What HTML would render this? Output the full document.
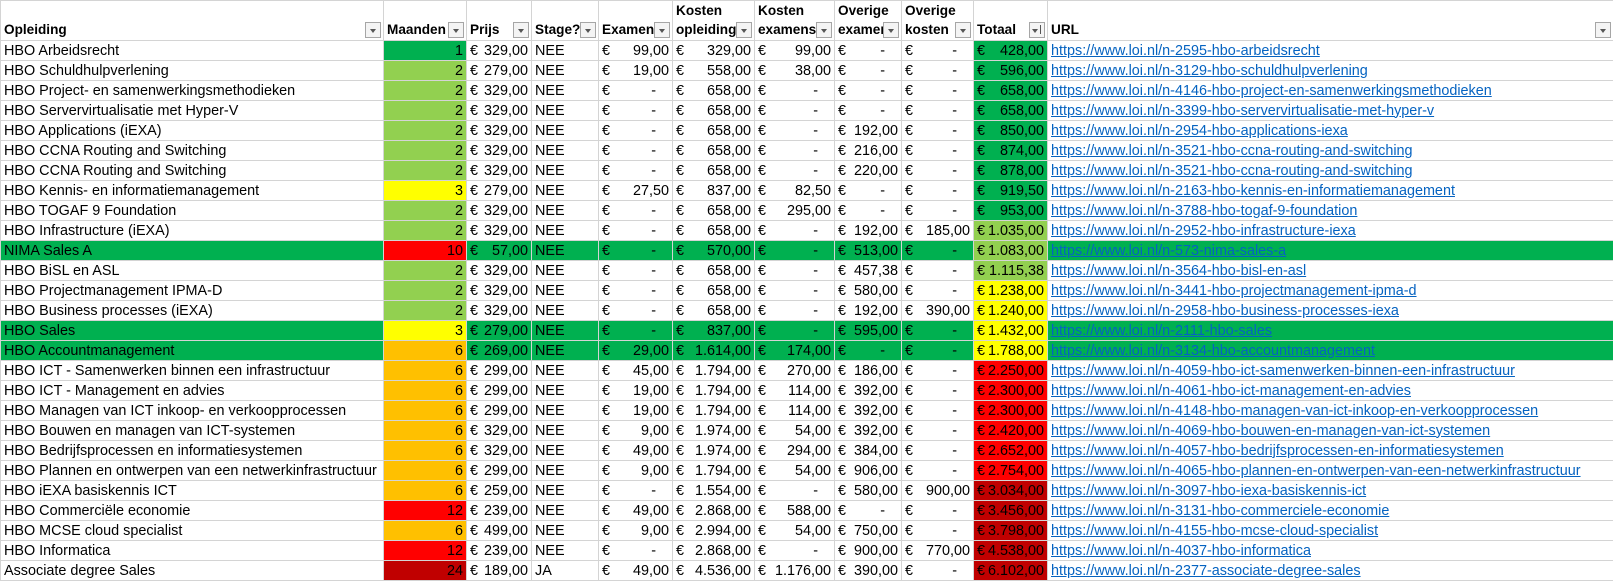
<!DOCTYPE html>
<html><head><meta charset="utf-8"><style>
body{margin:0;background:#fff;width:1613px;height:581px;overflow:hidden}
table{border-collapse:collapse;table-layout:fixed;width:1613px}
td,th{border:1px solid #d4d4d4;padding:0 3px;white-space:nowrap;overflow:hidden;font:14.4px "Liberation Sans",sans-serif;color:#000;line-height:18px}
tr{height:20px}
tr.h{height:40px}
th{text-align:left;vertical-align:bottom;font-weight:bold;font-size:13.6px;position:relative;line-height:19px;padding-bottom:1px}
.dd{position:absolute;right:2px;bottom:2px;width:14px;height:14px;border:1px solid #a6a6a6;background:#f4f4f4}
.dd:after{content:"";position:absolute;left:4px;top:6px;border-left:3px solid transparent;border-right:3px solid transparent;border-top:4px solid #555}
.ds:after{left:2px}
.ds:before{content:"";position:absolute;right:3px;top:2px;width:1px;height:9px;background:#555}
td.n{text-align:right}
td.e{text-align:right}
td.e i{float:left;font-style:normal}
td.d{padding-right:16px}
td.u a{color:#0563C1;text-decoration:underline}
tr.g td{background:#00B050}
.G{background:#00B050!important}.L{background:#92D050!important}.Y{background:#FFFF00!important}.O{background:#FFC000!important}.R{background:#FF0000!important}.D{background:#C00000!important}
</style></head><body>
<table>
<colgroup><col style="width:383px"><col style="width:83px"><col style="width:65px"><col style="width:67px"><col style="width:74px"><col style="width:82px"><col style="width:80px"><col style="width:67px"><col style="width:72px"><col style="width:74px"><col style="width:566px"></colgroup>
<tr class="h"><th>Opleiding<span class="dd"></span></th><th>Maanden<span class="dd"></span></th><th>Prijs<span class="dd"></span></th><th>Stage?<span class="dd"></span></th><th>Examen<span class="dd"></span></th><th>Kosten<br>opleiding<span class="dd"></span></th><th>Kosten<br>examens<span class="dd"></span></th><th>Overige<br>examen<span class="dd"></span></th><th>Overige<br>kosten<span class="dd"></span></th><th>Totaal<span class="dd ds"></span></th><th>URL<span class="dd"></span></th></tr>
<tr><td>HBO Arbeidsrecht</td><td class="n G">1</td><td class="e"><i>€</i>329,00</td><td>NEE</td><td class="e"><i>€</i>99,00</td><td class="e"><i>€</i>329,00</td><td class="e"><i>€</i>99,00</td><td class="e d"><i>€</i>-</td><td class="e d"><i>€</i>-</td><td class="e G"><i>€</i>428,00</td><td class="u"><a>https://www.loi.nl/n-2595-hbo-arbeidsrecht</a></td></tr>
<tr><td>HBO Schuldhulpverlening</td><td class="n L">2</td><td class="e"><i>€</i>279,00</td><td>NEE</td><td class="e"><i>€</i>19,00</td><td class="e"><i>€</i>558,00</td><td class="e"><i>€</i>38,00</td><td class="e d"><i>€</i>-</td><td class="e d"><i>€</i>-</td><td class="e G"><i>€</i>596,00</td><td class="u"><a>https://www.loi.nl/n-3129-hbo-schuldhulpverlening</a></td></tr>
<tr><td>HBO Project- en samenwerkingsmethodieken</td><td class="n L">2</td><td class="e"><i>€</i>329,00</td><td>NEE</td><td class="e d"><i>€</i>-</td><td class="e"><i>€</i>658,00</td><td class="e d"><i>€</i>-</td><td class="e d"><i>€</i>-</td><td class="e d"><i>€</i>-</td><td class="e G"><i>€</i>658,00</td><td class="u"><a>https://www.loi.nl/n-4146-hbo-project-en-samenwerkingsmethodieken</a></td></tr>
<tr><td>HBO Servervirtualisatie met Hyper-V</td><td class="n L">2</td><td class="e"><i>€</i>329,00</td><td>NEE</td><td class="e d"><i>€</i>-</td><td class="e"><i>€</i>658,00</td><td class="e d"><i>€</i>-</td><td class="e d"><i>€</i>-</td><td class="e d"><i>€</i>-</td><td class="e G"><i>€</i>658,00</td><td class="u"><a>https://www.loi.nl/n-3399-hbo-servervirtualisatie-met-hyper-v</a></td></tr>
<tr><td>HBO Applications (iEXA)</td><td class="n L">2</td><td class="e"><i>€</i>329,00</td><td>NEE</td><td class="e d"><i>€</i>-</td><td class="e"><i>€</i>658,00</td><td class="e d"><i>€</i>-</td><td class="e"><i>€</i>192,00</td><td class="e d"><i>€</i>-</td><td class="e G"><i>€</i>850,00</td><td class="u"><a>https://www.loi.nl/n-2954-hbo-applications-iexa</a></td></tr>
<tr><td>HBO CCNA Routing and Switching</td><td class="n L">2</td><td class="e"><i>€</i>329,00</td><td>NEE</td><td class="e d"><i>€</i>-</td><td class="e"><i>€</i>658,00</td><td class="e d"><i>€</i>-</td><td class="e"><i>€</i>216,00</td><td class="e d"><i>€</i>-</td><td class="e G"><i>€</i>874,00</td><td class="u"><a>https://www.loi.nl/n-3521-hbo-ccna-routing-and-switching</a></td></tr>
<tr><td>HBO CCNA Routing and Switching</td><td class="n L">2</td><td class="e"><i>€</i>329,00</td><td>NEE</td><td class="e d"><i>€</i>-</td><td class="e"><i>€</i>658,00</td><td class="e d"><i>€</i>-</td><td class="e"><i>€</i>220,00</td><td class="e d"><i>€</i>-</td><td class="e G"><i>€</i>878,00</td><td class="u"><a>https://www.loi.nl/n-3521-hbo-ccna-routing-and-switching</a></td></tr>
<tr><td>HBO Kennis- en informatiemanagement</td><td class="n Y">3</td><td class="e"><i>€</i>279,00</td><td>NEE</td><td class="e"><i>€</i>27,50</td><td class="e"><i>€</i>837,00</td><td class="e"><i>€</i>82,50</td><td class="e d"><i>€</i>-</td><td class="e d"><i>€</i>-</td><td class="e G"><i>€</i>919,50</td><td class="u"><a>https://www.loi.nl/n-2163-hbo-kennis-en-informatiemanagement</a></td></tr>
<tr><td>HBO TOGAF 9 Foundation</td><td class="n L">2</td><td class="e"><i>€</i>329,00</td><td>NEE</td><td class="e d"><i>€</i>-</td><td class="e"><i>€</i>658,00</td><td class="e"><i>€</i>295,00</td><td class="e d"><i>€</i>-</td><td class="e d"><i>€</i>-</td><td class="e G"><i>€</i>953,00</td><td class="u"><a>https://www.loi.nl/n-3788-hbo-togaf-9-foundation</a></td></tr>
<tr><td>HBO Infrastructure (iEXA)</td><td class="n L">2</td><td class="e"><i>€</i>329,00</td><td>NEE</td><td class="e d"><i>€</i>-</td><td class="e"><i>€</i>658,00</td><td class="e d"><i>€</i>-</td><td class="e"><i>€</i>192,00</td><td class="e"><i>€</i>185,00</td><td class="e L"><i>€</i>1.035,00</td><td class="u"><a>https://www.loi.nl/n-2952-hbo-infrastructure-iexa</a></td></tr>
<tr class="g"><td>NIMA Sales A</td><td class="n R">10</td><td class="e"><i>€</i>57,00</td><td>NEE</td><td class="e d"><i>€</i>-</td><td class="e"><i>€</i>570,00</td><td class="e d"><i>€</i>-</td><td class="e"><i>€</i>513,00</td><td class="e d"><i>€</i>-</td><td class="e L"><i>€</i>1.083,00</td><td class="u"><a>https://www.loi.nl/n-573-nima-sales-a</a></td></tr>
<tr><td>HBO BiSL en ASL</td><td class="n L">2</td><td class="e"><i>€</i>329,00</td><td>NEE</td><td class="e d"><i>€</i>-</td><td class="e"><i>€</i>658,00</td><td class="e d"><i>€</i>-</td><td class="e"><i>€</i>457,38</td><td class="e d"><i>€</i>-</td><td class="e L"><i>€</i>1.115,38</td><td class="u"><a>https://www.loi.nl/n-3564-hbo-bisl-en-asl</a></td></tr>
<tr><td>HBO Projectmanagement IPMA-D</td><td class="n L">2</td><td class="e"><i>€</i>329,00</td><td>NEE</td><td class="e d"><i>€</i>-</td><td class="e"><i>€</i>658,00</td><td class="e d"><i>€</i>-</td><td class="e"><i>€</i>580,00</td><td class="e d"><i>€</i>-</td><td class="e Y"><i>€</i>1.238,00</td><td class="u"><a>https://www.loi.nl/n-3441-hbo-projectmanagement-ipma-d</a></td></tr>
<tr><td>HBO Business processes (iEXA)</td><td class="n L">2</td><td class="e"><i>€</i>329,00</td><td>NEE</td><td class="e d"><i>€</i>-</td><td class="e"><i>€</i>658,00</td><td class="e d"><i>€</i>-</td><td class="e"><i>€</i>192,00</td><td class="e"><i>€</i>390,00</td><td class="e Y"><i>€</i>1.240,00</td><td class="u"><a>https://www.loi.nl/n-2958-hbo-business-processes-iexa</a></td></tr>
<tr class="g"><td>HBO Sales</td><td class="n Y">3</td><td class="e"><i>€</i>279,00</td><td>NEE</td><td class="e d"><i>€</i>-</td><td class="e"><i>€</i>837,00</td><td class="e d"><i>€</i>-</td><td class="e"><i>€</i>595,00</td><td class="e d"><i>€</i>-</td><td class="e Y"><i>€</i>1.432,00</td><td class="u"><a>https://www.loi.nl/n-2111-hbo-sales</a></td></tr>
<tr class="g"><td>HBO Accountmanagement</td><td class="n O">6</td><td class="e"><i>€</i>269,00</td><td>NEE</td><td class="e"><i>€</i>29,00</td><td class="e"><i>€</i>1.614,00</td><td class="e"><i>€</i>174,00</td><td class="e d"><i>€</i>-</td><td class="e d"><i>€</i>-</td><td class="e Y"><i>€</i>1.788,00</td><td class="u"><a>https://www.loi.nl/n-3134-hbo-accountmanagement</a></td></tr>
<tr><td>HBO ICT - Samenwerken binnen een infrastructuur</td><td class="n O">6</td><td class="e"><i>€</i>299,00</td><td>NEE</td><td class="e"><i>€</i>45,00</td><td class="e"><i>€</i>1.794,00</td><td class="e"><i>€</i>270,00</td><td class="e"><i>€</i>186,00</td><td class="e d"><i>€</i>-</td><td class="e R"><i>€</i>2.250,00</td><td class="u"><a>https://www.loi.nl/n-4059-hbo-ict-samenwerken-binnen-een-infrastructuur</a></td></tr>
<tr><td>HBO ICT - Management en advies</td><td class="n O">6</td><td class="e"><i>€</i>299,00</td><td>NEE</td><td class="e"><i>€</i>19,00</td><td class="e"><i>€</i>1.794,00</td><td class="e"><i>€</i>114,00</td><td class="e"><i>€</i>392,00</td><td class="e d"><i>€</i>-</td><td class="e R"><i>€</i>2.300,00</td><td class="u"><a>https://www.loi.nl/n-4061-hbo-ict-management-en-advies</a></td></tr>
<tr><td>HBO Managen van ICT inkoop- en verkoopprocessen</td><td class="n O">6</td><td class="e"><i>€</i>299,00</td><td>NEE</td><td class="e"><i>€</i>19,00</td><td class="e"><i>€</i>1.794,00</td><td class="e"><i>€</i>114,00</td><td class="e"><i>€</i>392,00</td><td class="e d"><i>€</i>-</td><td class="e R"><i>€</i>2.300,00</td><td class="u"><a>https://www.loi.nl/n-4148-hbo-managen-van-ict-inkoop-en-verkoopprocessen</a></td></tr>
<tr><td>HBO Bouwen en managen van ICT-systemen</td><td class="n O">6</td><td class="e"><i>€</i>329,00</td><td>NEE</td><td class="e"><i>€</i>9,00</td><td class="e"><i>€</i>1.974,00</td><td class="e"><i>€</i>54,00</td><td class="e"><i>€</i>392,00</td><td class="e d"><i>€</i>-</td><td class="e R"><i>€</i>2.420,00</td><td class="u"><a>https://www.loi.nl/n-4069-hbo-bouwen-en-managen-van-ict-systemen</a></td></tr>
<tr><td>HBO Bedrijfsprocessen en informatiesystemen</td><td class="n O">6</td><td class="e"><i>€</i>329,00</td><td>NEE</td><td class="e"><i>€</i>49,00</td><td class="e"><i>€</i>1.974,00</td><td class="e"><i>€</i>294,00</td><td class="e"><i>€</i>384,00</td><td class="e d"><i>€</i>-</td><td class="e R"><i>€</i>2.652,00</td><td class="u"><a>https://www.loi.nl/n-4057-hbo-bedrijfsprocessen-en-informatiesystemen</a></td></tr>
<tr><td>HBO Plannen en ontwerpen van een netwerkinfrastructuur</td><td class="n O">6</td><td class="e"><i>€</i>299,00</td><td>NEE</td><td class="e"><i>€</i>9,00</td><td class="e"><i>€</i>1.794,00</td><td class="e"><i>€</i>54,00</td><td class="e"><i>€</i>906,00</td><td class="e d"><i>€</i>-</td><td class="e R"><i>€</i>2.754,00</td><td class="u"><a>https://www.loi.nl/n-4065-hbo-plannen-en-ontwerpen-van-een-netwerkinfrastructuur</a></td></tr>
<tr><td>HBO iEXA basiskennis ICT</td><td class="n O">6</td><td class="e"><i>€</i>259,00</td><td>NEE</td><td class="e d"><i>€</i>-</td><td class="e"><i>€</i>1.554,00</td><td class="e d"><i>€</i>-</td><td class="e"><i>€</i>580,00</td><td class="e"><i>€</i>900,00</td><td class="e D"><i>€</i>3.034,00</td><td class="u"><a>https://www.loi.nl/n-3097-hbo-iexa-basiskennis-ict</a></td></tr>
<tr><td>HBO Commerciële economie</td><td class="n R">12</td><td class="e"><i>€</i>239,00</td><td>NEE</td><td class="e"><i>€</i>49,00</td><td class="e"><i>€</i>2.868,00</td><td class="e"><i>€</i>588,00</td><td class="e d"><i>€</i>-</td><td class="e d"><i>€</i>-</td><td class="e D"><i>€</i>3.456,00</td><td class="u"><a>https://www.loi.nl/n-3131-hbo-commerciele-economie</a></td></tr>
<tr><td>HBO MCSE cloud specialist</td><td class="n O">6</td><td class="e"><i>€</i>499,00</td><td>NEE</td><td class="e"><i>€</i>9,00</td><td class="e"><i>€</i>2.994,00</td><td class="e"><i>€</i>54,00</td><td class="e"><i>€</i>750,00</td><td class="e d"><i>€</i>-</td><td class="e D"><i>€</i>3.798,00</td><td class="u"><a>https://www.loi.nl/n-4155-hbo-mcse-cloud-specialist</a></td></tr>
<tr><td>HBO Informatica</td><td class="n R">12</td><td class="e"><i>€</i>239,00</td><td>NEE</td><td class="e d"><i>€</i>-</td><td class="e"><i>€</i>2.868,00</td><td class="e d"><i>€</i>-</td><td class="e"><i>€</i>900,00</td><td class="e"><i>€</i>770,00</td><td class="e D"><i>€</i>4.538,00</td><td class="u"><a>https://www.loi.nl/n-4037-hbo-informatica</a></td></tr>
<tr><td>Associate degree Sales</td><td class="n D">24</td><td class="e"><i>€</i>189,00</td><td>JA</td><td class="e"><i>€</i>49,00</td><td class="e"><i>€</i>4.536,00</td><td class="e"><i>€</i>1.176,00</td><td class="e"><i>€</i>390,00</td><td class="e d"><i>€</i>-</td><td class="e D"><i>€</i>6.102,00</td><td class="u"><a>https://www.loi.nl/n-2377-associate-degree-sales</a></td></tr>
</table>
</body></html>
